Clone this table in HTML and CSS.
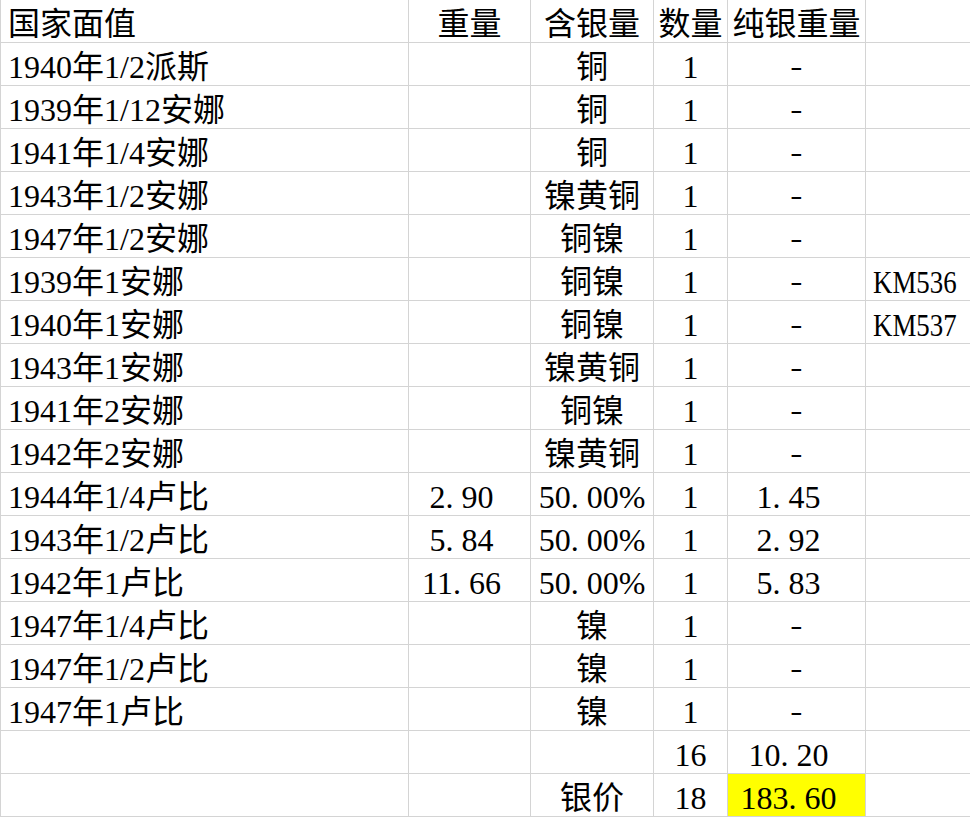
FILE: index.html
```html
<!DOCTYPE html>
<html lang="zh">
<head>
<meta charset="utf-8">
<title>银币</title>
<link rel="stylesheet" href="styles.css">
</head>
<body>
<div class="sheet">
  <div class="c c1">国家面值</div><div class="c c2 ctr">重量</div><div class="c c3 ctr">含银量</div><div class="c c4 ctr">数量</div><div class="c c5 ctr">纯银重量</div><div class="c c6"></div>

  <div class="c c1">1940年1/2派斯</div><div class="c c2"></div><div class="c c3 ctr">铜</div><div class="c c4 ctr">1</div><div class="c c5 ctr"><span class="dash">-</span></div><div class="c c6"></div>
  <div class="c c1">1939年1/12安娜</div><div class="c c2"></div><div class="c c3 ctr">铜</div><div class="c c4 ctr">1</div><div class="c c5 ctr"><span class="dash">-</span></div><div class="c c6"></div>
  <div class="c c1">1941年1/4安娜</div><div class="c c2"></div><div class="c c3 ctr">铜</div><div class="c c4 ctr">1</div><div class="c c5 ctr"><span class="dash">-</span></div><div class="c c6"></div>
  <div class="c c1">1943年1/2安娜</div><div class="c c2"></div><div class="c c3 ctr">镍黄铜</div><div class="c c4 ctr">1</div><div class="c c5 ctr"><span class="dash">-</span></div><div class="c c6"></div>
  <div class="c c1">1947年1/2安娜</div><div class="c c2"></div><div class="c c3 ctr">铜镍</div><div class="c c4 ctr">1</div><div class="c c5 ctr"><span class="dash">-</span></div><div class="c c6"></div>
  <div class="c c1">1939年1安娜</div><div class="c c2"></div><div class="c c3 ctr">铜镍</div><div class="c c4 ctr">1</div><div class="c c5 ctr"><span class="dash">-</span></div><div class="c c6"><span class="code">KM536</span></div>
  <div class="c c1">1940年1安娜</div><div class="c c2"></div><div class="c c3 ctr">铜镍</div><div class="c c4 ctr">1</div><div class="c c5 ctr"><span class="dash">-</span></div><div class="c c6"><span class="code">KM537</span></div>
  <div class="c c1">1943年1安娜</div><div class="c c2"></div><div class="c c3 ctr">镍黄铜</div><div class="c c4 ctr">1</div><div class="c c5 ctr"><span class="dash">-</span></div><div class="c c6"></div>
  <div class="c c1">1941年2安娜</div><div class="c c2"></div><div class="c c3 ctr">铜镍</div><div class="c c4 ctr">1</div><div class="c c5 ctr"><span class="dash">-</span></div><div class="c c6"></div>
  <div class="c c1">1942年2安娜</div><div class="c c2"></div><div class="c c3 ctr">镍黄铜</div><div class="c c4 ctr">1</div><div class="c c5 ctr"><span class="dash">-</span></div><div class="c c6"></div>
  <div class="c c1">1944年1/4卢比</div><div class="c c2 ctr num">2<span class="pt">.</span>90</div><div class="c c3 ctr">50<span class="pt">.</span>00%</div><div class="c c4 ctr">1</div><div class="c c5 ctr num">1<span class="pt">.</span>45</div><div class="c c6"></div>
  <div class="c c1">1943年1/2卢比</div><div class="c c2 ctr num">5<span class="pt">.</span>84</div><div class="c c3 ctr">50<span class="pt">.</span>00%</div><div class="c c4 ctr">1</div><div class="c c5 ctr num">2<span class="pt">.</span>92</div><div class="c c6"></div>
  <div class="c c1">1942年1卢比</div><div class="c c2 ctr num">11<span class="pt">.</span>66</div><div class="c c3 ctr">50<span class="pt">.</span>00%</div><div class="c c4 ctr">1</div><div class="c c5 ctr num">5<span class="pt">.</span>83</div><div class="c c6"></div>
  <div class="c c1">1947年1/4卢比</div><div class="c c2"></div><div class="c c3 ctr">镍</div><div class="c c4 ctr">1</div><div class="c c5 ctr"><span class="dash">-</span></div><div class="c c6"></div>
  <div class="c c1">1947年1/2卢比</div><div class="c c2"></div><div class="c c3 ctr">镍</div><div class="c c4 ctr">1</div><div class="c c5 ctr"><span class="dash">-</span></div><div class="c c6"></div>
  <div class="c c1">1947年1卢比</div><div class="c c2"></div><div class="c c3 ctr">镍</div><div class="c c4 ctr">1</div><div class="c c5 ctr"><span class="dash">-</span></div><div class="c c6"></div>
  <div class="c c1"></div><div class="c c2"></div><div class="c c3"></div><div class="c c4 ctr">16</div><div class="c c5 ctr num">10<span class="pt">.</span>20</div><div class="c c6"></div>
  <div class="c c1"></div><div class="c c2"></div><div class="c c3 ctr">银价</div><div class="c c4 ctr">18</div><div class="c c5 ctr num hl">183<span class="pt">.</span>60</div><div class="c c6"></div>
</div>
</body>
</html>
```
FILE: styles.css
```css
html, body {
  margin: 0;
  padding: 0;
  background: #ffffff;
}

body {
  width: 970px;
  height: 818px;
  overflow: hidden;
  font-family: "Liberation Serif", "Noto Sans CJK SC", serif;
  font-size: 32px;
  color: #000000;
}

.sheet {
  display: grid;
  grid-template-columns: 409px 122px 123px 74px 138px 104px;
  grid-auto-rows: 43px;
}

.c {
  box-sizing: border-box;
  border-right: 1px solid #d4d4d4;
  border-bottom: 1px solid #d4d4d4;
  display: flex;
  align-items: center;
  padding: 5px 0 0 7px;
  white-space: nowrap;
  overflow: hidden;
  line-height: 36px;
}

.c1 {
  border-left: 1px solid #d4d4d4;
}

.c6 {
  border-right: none;
}

.code {
  display: inline-block;
  transform: scaleX(0.84);
  transform-origin: left center;
}

.ctr {
  justify-content: center;
  padding-left: 0;
}

.num {
  padding-right: 16px;
}

.pt {
  display: inline-block;
  width: 0.5em;
}

.dash {
  display: inline-block;
  font-size: 26px;
  transform: scaleX(1.4);
}

.hl {
  background: #ffff00;
}
```
